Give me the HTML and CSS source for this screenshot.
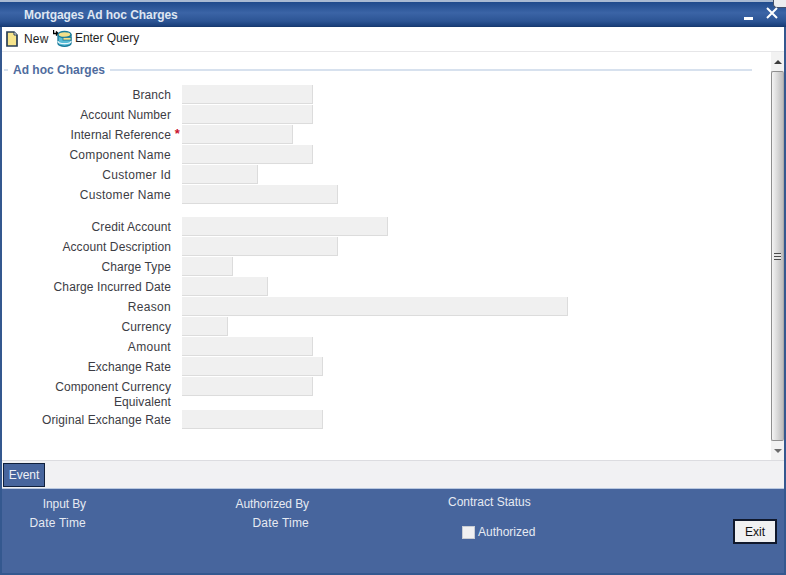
FILE: index.html
```html
<!DOCTYPE html>
<html lang="en">
<head>
<meta charset="utf-8">
<title>Mortgages Ad hoc Charges</title>
<link rel="stylesheet" href="styles.css">
</head>
<body>
<div class="window">
  <div class="topstrip"><span class="corner"></span></div>
  <header class="titlebar">
    <span class="title">Mortgages Ad hoc Charges</span>
    <span class="winbtns">
      <svg class="minimize" width="9" height="3" viewBox="0 0 9 3"><rect width="9" height="3" fill="#fff"/></svg>
      <svg class="close" width="12" height="12" viewBox="0 0 12 12"><path d="M1 1 11 11M11 1 1 11" stroke="#fff" stroke-width="2" fill="none"/></svg>
    </span>
  </header>
  <nav class="toolbar">
    <span class="tool tool-new">
      <svg width="12" height="16" viewBox="0 0 12 16"><path d="M1 1h7l3 3v11H1z" fill="#f6e48c" stroke="#2a3f55" stroke-width="1.7"/><path d="M8 1v3h3" fill="#fff" stroke="#2a3f55"/></svg>
      New
    </span>
    <span class="tool tool-query">
      <svg width="19" height="18" viewBox="0 0 19 18"><path d="M.5 1v3.500h4M3 2.500l2 2-2 2" fill="none" stroke="#000" stroke-width="1.400"/><path d="M5 6v8.500c0 1.500 3 2.800 6.500 2.800s6.500-1.300 6.500-2.800V6z" fill="#58bcd6" stroke="#17799a" stroke-width="1.300"/><ellipse cx="11.500" cy="5.500" rx="6.500" ry="3" fill="#f2e08a" stroke="#17799a" stroke-width="1.300"/><path d="M5 12c0 1.500 3 2.700 6.500 2.700S18 13.500 18 12" fill="none" stroke="#e8f6fa" stroke-width="1.200"/><rect x="10" y="8.500" width="8" height="2.600" fill="#f2e08a" stroke="#17799a" stroke-width=".8"/></svg>
      Enter Query
    </span>
  </nav>
  <div class="content">
    <main class="form-pane">
      <div class="legend"><span class="legend-dash"></span><span class="legend-text">Ad hoc Charges</span><span class="legend-line"></span></div>
      <div class="form">
        <div class="row"><label class="lbl">Branch</label><span class="inp w131"></span></div>
        <div class="row"><label class="lbl">Account Number</label><span class="inp w131"></span></div>
        <div class="row"><label class="lbl">Internal Reference<b class="req">*</b></label><span class="inp w111"></span></div>
        <div class="row"><label class="lbl lbl-wide">Component Name</label><span class="inp w131"></span></div>
        <div class="row"><label class="lbl lbl-wide">Customer Id</label><span class="inp w76"></span></div>
        <div class="row"><label class="lbl lbl-wide">Customer Name</label><span class="inp w156"></span></div>
        <div class="row row-gap"><label class="lbl">Credit Account</label><span class="inp w206"></span></div>
        <div class="row"><label class="lbl">Account Description</label><span class="inp w156"></span></div>
        <div class="row"><label class="lbl">Charge Type</label><span class="inp w51"></span></div>
        <div class="row"><label class="lbl">Charge Incurred Date</label><span class="inp w86"></span></div>
        <div class="row"><label class="lbl lbl-wide">Reason</label><span class="inp w386"></span></div>
        <div class="row"><label class="lbl">Currency</label><span class="inp w46"></span></div>
        <div class="row"><label class="lbl lbl-wide">Amount</label><span class="inp w131"></span></div>
        <div class="row"><label class="lbl">Exchange Rate</label><span class="inp w141"></span></div>
        <div class="row row-tall"><label class="lbl">Component Currency Equivalent</label><span class="inp w131"></span></div>
        <div class="row"><label class="lbl">Original Exchange Rate</label><span class="inp w141"></span></div>
      </div>
    </main>
    <div class="scrollbar">
      <span class="sb-btn"><i class="arrow-up"></i></span>
      <span class="sb-thumb"><i class="grip"></i></span>
      <span class="sb-btn"><i class="arrow-down"></i></span>
    </div>
  </div>
  <div class="eventbar"><button class="event-btn">Event</button></div>
  <footer class="footer">
    <div class="audit audit-a">
      <span class="tight">Input By</span>
      <span class="wide">Date Time</span>
    </div>
    <div class="audit audit-b">
      <span class="tight">Authorized By</span>
      <span class="wide">Date Time</span>
    </div>
    <div class="status">
      <span>Contract Status</span>
      <span class="auth"><i class="check"></i>Authorized</span>
    </div>
    <button class="exit-btn">Exit</button>
  </footer>
</div>
</body>
</html>
```
FILE: styles.css
```css
* { box-sizing: border-box; }
html, body { margin: 0; padding: 0; }
body { width: 786px; height: 575px; overflow: hidden; background: #fff; font-family: "Liberation Sans", Arial, sans-serif; font-size: 12px; color: #3c3c44; }
.window { width: 786px; height: 575px; display: flex; flex-direction: column; border-left: 2px solid #34588f; border-right: 2px solid #34588f; border-bottom: 2px solid #34588f; }
.topstrip { height: 2px; background: #a9bad3; margin: 0 -2px; flex: none; position: relative; z-index: 1; }
.corner { position: absolute; right: 0; top: 0; width: 13px; height: 8px; background: #ecedf0; border: 1px solid #44506a; border-top: 0; border-right: 0; border-radius: 0 0 0 4px; }
.titlebar { height: 25px; flex: none; margin: 0 -2px; padding: 2px 8px 0 24px; display: flex; justify-content: space-between; align-items: center; background: linear-gradient(#1f4a8c, #3b64a6 45%, #2c5494 80%, #1a3f7a); border-bottom: 1px solid #183a70; }
.title { color: #dfe6f2; font-weight: bold; font-size: 12px; letter-spacing: -.08px; }
.winbtns { display: flex; align-items: center; gap: 13px; position: relative; z-index: 2; }
.minimize { margin-top: 7px; }
.close { margin-top: -4px; }
.toolbar { height: 25px; flex: none; display: flex; align-items: center; padding: 0 0 1px 4px; background: #fff; border-bottom: 1px solid #e6e6e8; color: #1e1e22; }
.tool { display: flex; align-items: center; }
.tool-new { gap: 6px; width: 47px; flex: none; letter-spacing: .15px; }
.tool-query { gap: 3px; margin-top: -1px; letter-spacing: -.05px; }
.content { height: 409px; flex: none; display: flex; background: #fff; border-bottom: 1px solid #dcdce0; }
.form-pane { flex: 1; padding: 11px 19px 0 2px; }
.legend { display: flex; align-items: center; height: 13px; }
.legend-dash { width: 4px; height: 2px; background: #d7e1ee; margin-right: 5px; }
.legend-text { color: #4f6c9e; font-weight: bold; font-size: 12px; margin-right: 5px; }
.legend-line { flex: 1; height: 2px; background: #d7e1ee; }
.form { margin-top: 9px; }
.row { display: flex; height: 20px; }
.row-gap { margin-top: 12px; }
.row-tall { height: 33px; }
.lbl { width: 167px; margin-right: 11px; text-align: right; line-height: 15px; padding-top: 3px; position: relative; letter-spacing: .1px; }
.lbl-wide { letter-spacing: .3px; }
.req { position: absolute; right: -9px; top: 1px; color: #c8102e; font-size: 13px; }
.inp { display: block; height: 19px; background: #f0f0f0; border-right: 1px solid #dcdcdc; border-bottom: 1px solid #dcdcdc; }
.w46 { width: 46px; } .w51 { width: 51px; } .w76 { width: 76px; } .w86 { width: 86px; }
.w111 { width: 111px; } .w131 { width: 131px; } .w141 { width: 141px; } .w156 { width: 156px; }
.w206 { width: 206px; } .w386 { width: 386px; }
.scrollbar { width: 13px; flex: none; display: flex; flex-direction: column; background: #f0f0f0; }
.sb-btn { height: 19px; flex: none; display: flex; align-items: center; justify-content: center; background: #f2f2f2; }
.arrow-up { border: 4px solid transparent; border-top: 0; border-bottom: 4px solid #3c3c3c; }
.arrow-down { border: 4px solid transparent; border-bottom: 0; border-top: 4px solid #6c6c6c; }
.sb-thumb { flex: 1; display: flex; align-items: center; justify-content: center; background: linear-gradient(90deg, #f4f4f4, #d6d6d6 55%, #bcbcbc); border: 1px solid #8f8f8f; border-radius: 2px; border-right-color: #aaa; }
.grip { width: 7px; height: 7px; background: repeating-linear-gradient(#4a4a4a 0 1px, #e6e6e6 1px 3px); }
.eventbar { height: 28px; flex: none; background: #f1f1f3; padding: 2px 0 0 1px; border-bottom: 1px solid #b9c8e0; }
.event-btn { display: block; width: 42px; height: 24px; padding: 0; background: #47659d; border: 1px solid #10203c; color: #eef1f7; font: 12px "Liberation Sans", Arial, sans-serif; }
.footer { flex: 1; position: relative; display: flex; background: #47659d; color: #e6eaf2; }
.audit { display: flex; flex-direction: column; align-items: flex-end; width: 84px; gap: 5px; padding-top: 8px; line-height: 14px; }
.audit-b { width: 223px; }
.tight { letter-spacing: -.1px; }
.wide { letter-spacing: .2px; }
.status { margin-left: 139px; display: flex; flex-direction: column; padding-top: 6px; line-height: 14px; }
.auth { display: flex; align-items: center; margin: 16px 0 0 14px; gap: 3px; }
.check { width: 13px; height: 13px; background: #f0f0f2; border: 1px solid #c8ccd4; }
.exit-btn { position: absolute; left: 731px; top: 30px; width: 44px; height: 25px; padding: 0; background: #f0f0f2; border: 2px solid #10182c; color: #111; font: 12px "Liberation Sans", Arial, sans-serif; }
```
